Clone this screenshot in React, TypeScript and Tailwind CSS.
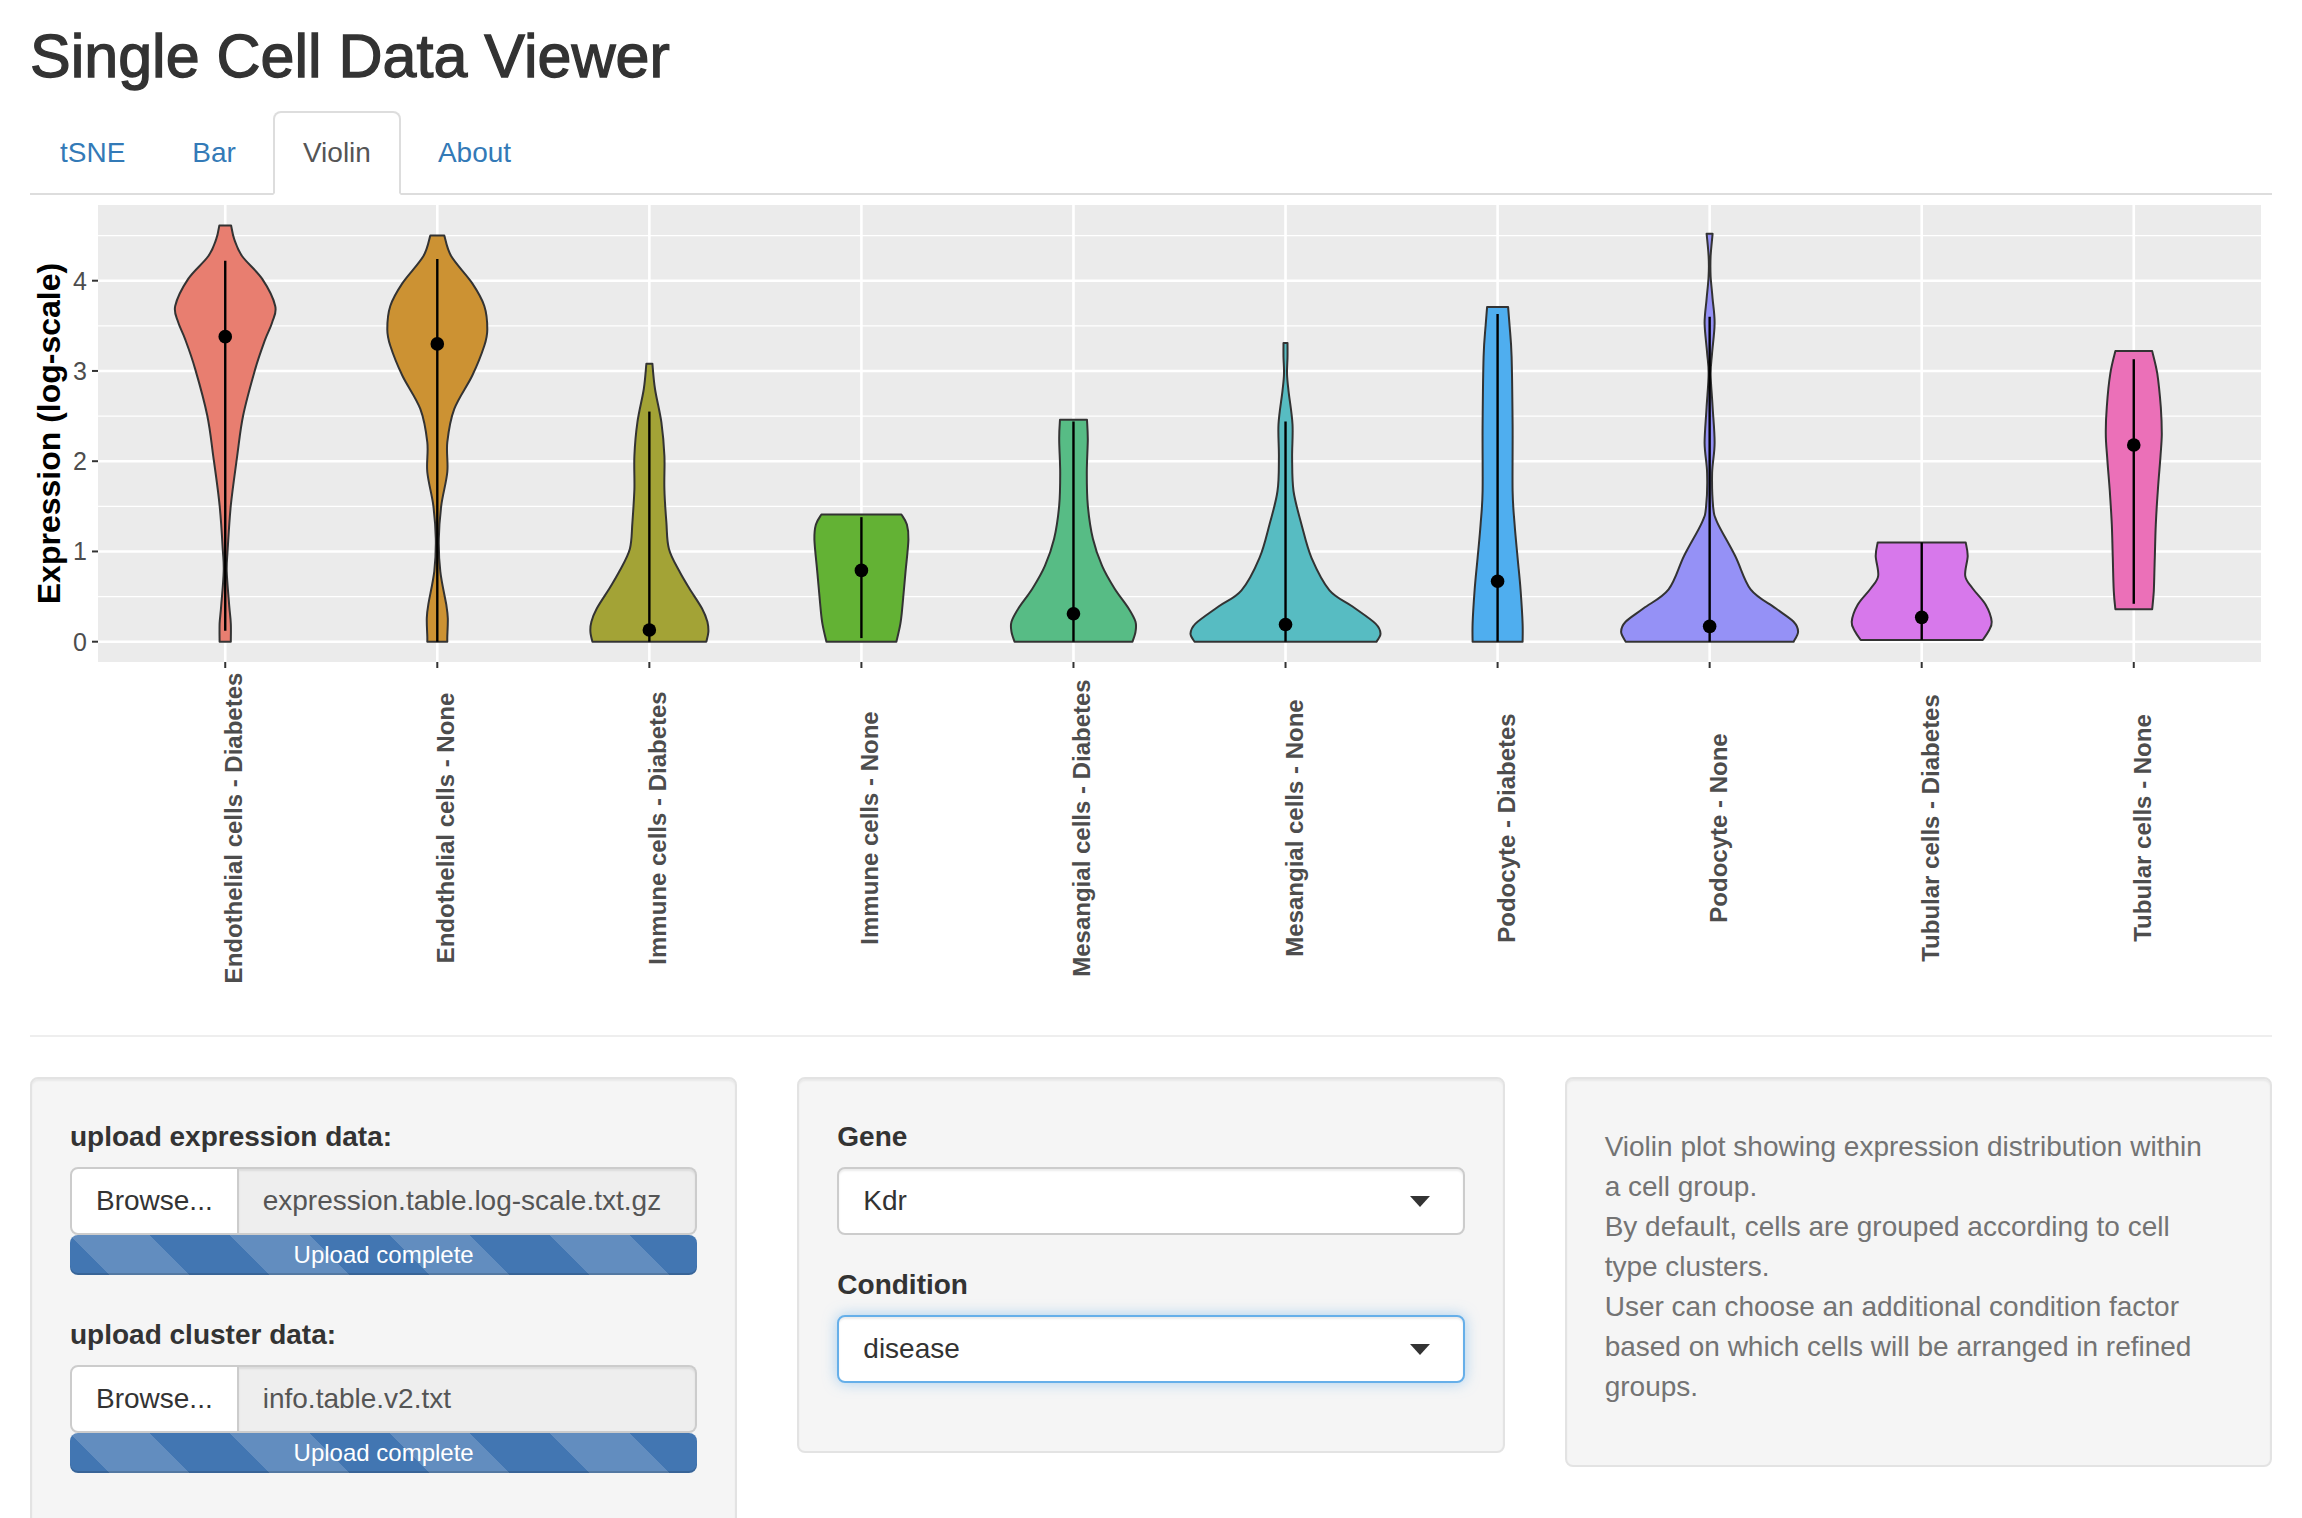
import React from 'react';

type Violin = {
  label: string;
  color: string;
  pts: [number, number][];
  dot: number;
  lo: number;
  hi: number;
};

// [value, half width in px] from bottom to top
const violins: Violin[] = [
  {
    label: 'Endothelial cells - Diabetes',
    color: '#E87E70',
    pts: [[0, 5.6], [0.2, 5.6], [0.4, 4], [0.78, 1.5], [1.03, 2.5], [1.51, 5.6], [2.06, 12], [2.51, 18], [3.02, 30], [3.35, 40], [3.54, 47], [3.72, 50], [4.02, 37], [4.27, 17], [4.46, 9], [4.61, 5.9]],
    dot: 3.38, lo: 0.12, hi: 4.22,
  },
  {
    label: 'Endothelial cells - None',
    color: '#CC9233',
    pts: [[0, 10], [0.06, 10], [0.26, 10.5], [0.41, 9], [0.78, 3], [1.14, 1.5], [1.51, 4], [1.88, 10], [2.21, 10], [2.58, 17], [2.95, 35], [3.28, 47], [3.46, 50], [3.72, 47], [3.97, 35], [4.27, 14], [4.5, 7]],
    dot: 3.3, lo: 0, hi: 4.24,
  },
  {
    label: 'Immune cells - Diabetes',
    color: '#A3A336',
    pts: [[0, 57], [0.11, 59], [0.22, 58], [0.37, 52.5], [0.59, 40], [0.78, 30], [1.03, 19.5], [1.32, 17], [1.69, 15], [2.06, 15], [2.43, 12], [2.8, 5.6], [3.08, 3]],
    dot: 0.13, lo: 0, hi: 2.55,
  },
  {
    label: 'Immune cells - None',
    color: '#63B234',
    pts: [[0, 35], [0.2, 39], [0.39, 41], [0.76, 44], [1.13, 47], [1.3, 45.5], [1.41, 40]],
    dot: 0.79, lo: 0.04, hi: 1.38,
  },
  {
    label: 'Mesangial cells - Diabetes',
    color: '#57BC85',
    pts: [[0, 59], [0.11, 62], [0.22, 62], [0.37, 55], [0.59, 41], [0.84, 28.6], [1.14, 19.4], [1.51, 14.3], [1.87, 13.3], [2.24, 14.3], [2.46, 13.5]],
    dot: 0.31, lo: 0, hi: 2.44,
  },
  {
    label: 'Mesangial cells - None',
    color: '#57BCC2',
    pts: [[0, 91], [0.09, 95], [0.2, 90], [0.39, 67], [0.57, 44], [0.93, 26], [1.3, 16], [1.67, 8], [2.04, 6.6], [2.41, 7], [2.78, 3], [2.97, 1.5], [3.15, 2], [3.31, 2]],
    dot: 0.19, lo: 0, hi: 2.44,
  },
  {
    label: 'Podocyte - Diabetes',
    color: '#4FAEEF',
    pts: [[0, 25], [0.2, 25], [0.57, 23], [0.93, 20], [1.3, 17], [1.67, 15], [2.41, 15], [3.16, 14], [3.5, 12], [3.71, 10.5]],
    dot: 0.67, lo: 0, hi: 3.63,
  },
  {
    label: 'Podocyte - None',
    color: '#9591F6',
    pts: [[0, 84], [0.11, 88.5], [0.22, 84], [0.37, 66], [0.58, 41], [0.95, 25.6], [1.32, 7.7], [1.5, 3.5], [1.87, 2.5], [2.2, 5], [2.6, 3], [2.97, 1], [3.2, 2.5], [3.53, 5], [3.8, 3], [4.05, 1], [4.27, 1], [4.52, 3]],
    dot: 0.17, lo: 0, hi: 3.6,
  },
  {
    label: 'Tubular cells - Diabetes',
    color: '#D778EB',
    pts: [[0.02, 61], [0.11, 66.5], [0.22, 70], [0.41, 64], [0.59, 51], [0.73, 43.5], [0.95, 46], [1.1, 44]],
    dot: 0.27, lo: 0.02, hi: 1.1,
  },
  {
    label: 'Tubular cells - None',
    color: '#EB70B8',
    pts: [[0.36, 18.4], [0.56, 20], [0.93, 21], [1.3, 22], [1.67, 24], [2.04, 26.6], [2.3, 28], [2.6, 27], [2.97, 23.5], [3.22, 18.4]],
    dot: 2.18, lo: 0.42, hi: 3.13,
  },
];

const P_LEFT = 68;
const P_RIGHT = 2231;
const P_TOP = 10;
const P_BOT = 467;
const unit = (P_RIGHT - P_LEFT) / 10.2;
const cx = (i: number) => P_LEFT + unit * (0.6 + i);
const yv = (v: number) => 446.7 - 90.25 * v;

type Pt = [number, number];

// catmull-rom through the points, as cubic segments
function smooth(points: Pt[]) {
  let d = '';
  for (let i = 0; i < points.length - 1; i++) {
    const p0 = points[i - 1] ?? points[i];
    const p1 = points[i];
    const p2 = points[i + 1];
    const p3 = points[i + 2] ?? p2;
    const c1x = p1[0] + (p2[0] - p0[0]) / 6;
    const c1y = p1[1] + (p2[1] - p0[1]) / 6;
    const c2x = p2[0] - (p3[0] - p1[0]) / 6;
    const c2y = p2[1] - (p3[1] - p1[1]) / 6;
    d += ` C${c1x.toFixed(1)},${c1y.toFixed(1)} ${c2x.toFixed(1)},${c2y.toFixed(1)} ${p2[0].toFixed(1)},${p2[1].toFixed(1)}`;
  }
  return d;
}

function violinPath(i: number, pts: [number, number][]) {
  const x = cx(i);
  const left: Pt[] = pts.map(([v, w]) => [x - w, yv(v)]);
  const right: Pt[] = [...pts].reverse().map(([v, w]) => [x + w, yv(v)]);
  return `M${left[0][0].toFixed(1)},${left[0][1].toFixed(1)}${smooth(left)} L${right[0][0].toFixed(1)},${right[0][1].toFixed(1)}${smooth(right)} Z`;
}

function ViolinPlot() {
  const font = 'Liberation Sans, Arial, sans-serif';
  return (
    <svg className="block h-[800px] w-[2242px]" viewBox="0 0 2242 800">
      {/* panel + grid */}
      <rect x={P_LEFT} y={P_TOP} width={P_RIGHT - P_LEFT} height={P_BOT - P_TOP} fill="#EBEBEB" />
      {[0.5, 1.5, 2.5, 3.5, 4.5].map((v) => (
        <line key={v} x1={P_LEFT} x2={P_RIGHT} y1={yv(v)} y2={yv(v)} stroke="#fff" strokeWidth={1.3} />
      ))}
      {[0, 1, 2, 3, 4].map((v) => (
        <line key={v} x1={P_LEFT} x2={P_RIGHT} y1={yv(v)} y2={yv(v)} stroke="#fff" strokeWidth={2.6} />
      ))}
      {violins.map((_, i) => (
        <line key={i} x1={cx(i)} x2={cx(i)} y1={P_TOP} y2={P_BOT} stroke="#fff" strokeWidth={2.6} />
      ))}

      {/* violins */}
      {violins.map((vl, i) => (
        <g key={vl.label}>
          <path d={violinPath(i, vl.pts)} fill={vl.color} stroke="#333" strokeWidth={2} strokeLinejoin="round" />
          <line x1={cx(i)} x2={cx(i)} y1={yv(vl.lo)} y2={yv(vl.hi)} stroke="#000" strokeWidth={2.4} />
          <circle cx={cx(i)} cy={yv(vl.dot)} r={6.8} fill="#000" />
        </g>
      ))}

      {/* y axis */}
      {[0, 1, 2, 3, 4].map((v) => (
        <g key={v}>
          <line x1={62} x2={P_LEFT} y1={yv(v)} y2={yv(v)} stroke="#333" strokeWidth={2} />
          <text x={57} y={yv(v) + 9} textAnchor="end" fontSize={25} fill="#4D4D4D" fontFamily={font}>
            {v}
          </text>
        </g>
      ))}
      <text
        transform={`translate(30 ${(P_TOP + P_BOT) / 2}) rotate(-90)`}
        textAnchor="middle"
        fontSize={32}
        fontWeight="bold"
        fill="#000"
        fontFamily={font}
      >
        Expression (log-scale)
      </text>

      {/* x axis */}
      {violins.map((vl, i) => (
        <g key={vl.label}>
          <line x1={cx(i)} x2={cx(i)} y1={P_BOT} y2={P_BOT + 6} stroke="#333" strokeWidth={2} />
          <text
            transform={`translate(${cx(i) + 17} 633) rotate(-90)`}
            textAnchor="middle"
            fontSize={24}
            fontWeight="bold"
            fill="#4D4D4D"
            fontFamily={font}
          >
            {vl.label}
          </text>
        </g>
      ))}
    </svg>
  );
}

function Caret() {
  return (
    <svg width="20" height="11" viewBox="0 0 20 11">
      <polygon points="0,0 20,0 10,11" fill="#333" />
    </svg>
  );
}

function FileInput({ name }: { name: string }) {
  return (
    <div>
      <div className="flex h-[68px]">
        <div className="flex items-center rounded-l-[8px] border-2 border-[#ccc] bg-white px-[24px] text-[#333]">
          Browse...
        </div>
        <div className="flex flex-1 items-center rounded-r-[8px] border-2 border-l-0 border-[#ccc] bg-[#eee] px-[24px] text-[#555] shadow-[inset_0_2px_2px_rgba(0,0,0,0.075)]">
          {name}
        </div>
      </div>
      <div className="h-[40px] overflow-hidden rounded-[8px] bg-[#4276b2] bg-[linear-gradient(45deg,rgba(255,255,255,0.17)_25%,transparent_25%,transparent_50%,rgba(255,255,255,0.17)_50%,rgba(255,255,255,0.17)_75%,transparent_75%,transparent)] bg-[length:160px_160px] text-center text-[24px] leading-[40px] text-white shadow-[inset_0_-2px_0_rgba(0,0,0,0.15)]">
        Upload complete
      </div>
    </div>
  );
}

function Select({ value, focused }: { value: string; focused?: boolean }) {
  return (
    <div
      className={
        focused
          ? 'flex h-[68px] items-center justify-between rounded-[8px] border-2 border-[#66afe9] bg-white pl-[24px] pr-[33px] text-[#333] shadow-[inset_0_2px_2px_rgba(0,0,0,0.075),0_0_14px_rgba(102,175,233,0.55)]'
          : 'flex h-[68px] items-center justify-between rounded-[8px] border-2 border-[#ccc] bg-white pl-[24px] pr-[33px] text-[#333] shadow-[inset_0_2px_2px_rgba(0,0,0,0.075)]'
      }
    >
      <span>{value}</span>
      <Caret />
    </div>
  );
}

const wellCls =
  'self-start rounded-[8px] border-2 border-[#e3e3e3] bg-[#f5f5f5] p-[38px] shadow-[inset_0_2px_2px_rgba(0,0,0,0.05)]';

export default function App() {
  return (
    <div className="h-[1518px] overflow-hidden bg-white font-['Liberation_Sans',Arial,sans-serif] text-[28px] leading-[40px] text-[#333]">
      <div className="px-[30px]">
        <h2 className="mb-[22px] pt-[23px] text-[61px] leading-[66px] font-normal [-webkit-text-stroke:1.3px_#333]">
          Single Cell Data Viewer
        </h2>

        {/* Tabs */}
        <nav className="flex border-b-2 border-[#ddd]">
          {['tSNE', 'Bar', 'Violin', 'About'].map((t) =>
            t === 'Violin' ? (
              <div
                key={t}
                className="-mb-[2px] mr-[7px] rounded-t-[8px] border-2 border-[#ddd] border-b-transparent bg-white px-[28px] py-[20px] text-[#555]"
              >
                {t}
              </div>
            ) : (
              <div
                key={t}
                className="-mb-[2px] mr-[7px] rounded-t-[8px] border-2 border-transparent px-[28px] py-[20px] text-[#337ab7]"
              >
                {t}
              </div>
            )
          )}
        </nav>

        <ViolinPlot />

        <hr className="mt-[40px] border-0 border-t-2 border-[#eee]" />

        <div className="mt-[40px] grid grid-cols-3 items-start gap-[60px]">
          {/* Uploads */}
          <div className={wellCls}>
            <div className="font-bold">upload expression data:</div>
            <div className="mt-[10px]">
              <FileInput name="expression.table.log-scale.txt.gz" />
            </div>
            <div className="mt-[40px] font-bold">upload cluster data:</div>
            <div className="mt-[10px]">
              <FileInput name="info.table.v2.txt" />
            </div>
            <div className="h-[80px]" />
          </div>

          {/* Selectors */}
          <div className={wellCls}>
            <div className="font-bold">Gene</div>
            <div className="mt-[10px]">
              <Select value="Kdr" />
            </div>
            <div className="mt-[30px] font-bold">Condition</div>
            <div className="mt-[10px] mb-[30px]">
              <Select value="disease" focused />
            </div>
          </div>

          {/* Help */}
          <div className={wellCls}>
            <div className="mt-[10px] mb-[20px] text-[#737373]">
              <div>Violin plot showing expression distribution within</div>
              <div>a cell group.</div>
              <div>By default, cells are grouped according to cell</div>
              <div>type clusters.</div>
              <div>User can choose an additional condition factor</div>
              <div>based on which cells will be arranged in refined</div>
              <div>groups.</div>
            </div>
          </div>
        </div>
      </div>
    </div>
  );
}
